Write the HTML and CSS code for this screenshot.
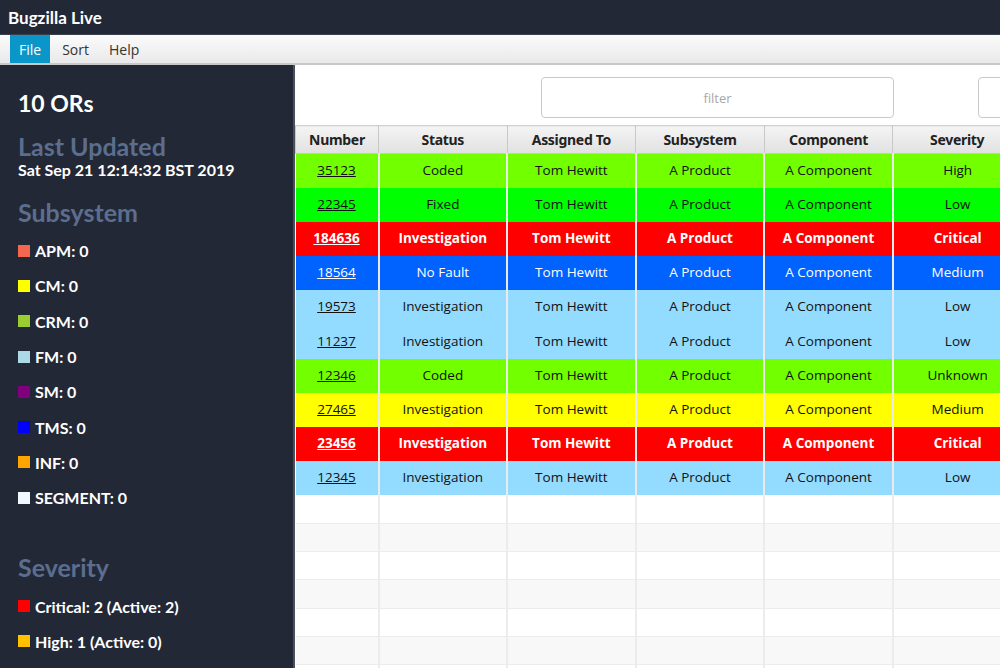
FILE: index.html
```html
<!DOCTYPE html>
<html>
<head>
<meta charset="utf-8">
<link rel="stylesheet" href="styles.css">
</head>
<body>
<div class="titlebar">Bugzilla Live</div>
<div class="menubar">
  <span class="menu active">File</span>
  <span class="menu">Sort</span>
  <span class="menu">Help</span>
</div>
<div class="main">
  <aside class="sidebar">
    <div class="count">10 ORs</div>
    <div class="heading">Last Updated</div>
    <div class="date">Sat Sep 21 12:14:32 BST 2019</div>
    <div class="heading sub">Subsystem</div>
    <ul class="legend">
      <li><span class="sq" style="background:#f4664d"></span>APM: 0</li>
      <li><span class="sq" style="background:#ffff00"></span>CM: 0</li>
      <li><span class="sq" style="background:#9acd32"></span>CRM: 0</li>
      <li><span class="sq" style="background:#add8e6"></span>FM: 0</li>
      <li><span class="sq" style="background:#800080"></span>SM: 0</li>
      <li><span class="sq" style="background:#0000ff"></span>TMS: 0</li>
      <li><span class="sq" style="background:#ffa500"></span>INF: 0</li>
      <li><span class="sq" style="background:#f0f8ff"></span>SEGMENT: 0</li>
    </ul>
    <div class="heading sev">Severity</div>
    <ul class="legend">
      <li><span class="sq" style="background:#ff0000"></span>Critical: 2 (Active: 2)</li>
      <li><span class="sq" style="background:#ffc000"></span>High: 1 (Active: 0)</li>
    </ul>
  </aside>
  <section class="content">
    <div class="filters">
      <input class="filter" type="text" placeholder="filter">
      <input class="filter second" type="text">
    </div>
    <table class="grid">
      <colgroup>
        <col class="c-num"><col class="c-wide"><col class="c-wide"><col class="c-wide"><col class="c-wide"><col class="c-wide">
      </colgroup>
      <thead>
        <tr><th>Number</th><th>Status</th><th>Assigned To</th><th>Subsystem</th><th>Component</th><th>Severity</th></tr>
      </thead>
      <tbody>
        <tr class="lime"><td><a>35123</a></td><td>Coded</td><td>Tom Hewitt</td><td>A Product</td><td>A Component</td><td>High</td></tr>
        <tr class="green"><td><a>22345</a></td><td>Fixed</td><td>Tom Hewitt</td><td>A Product</td><td>A Component</td><td>Low</td></tr>
        <tr class="red"><td><a>184636</a></td><td>Investigation</td><td>Tom Hewitt</td><td>A Product</td><td>A Component</td><td>Critical</td></tr>
        <tr class="blue"><td><a>18564</a></td><td>No Fault</td><td>Tom Hewitt</td><td>A Product</td><td>A Component</td><td>Medium</td></tr>
        <tr class="sky"><td><a>19573</a></td><td>Investigation</td><td>Tom Hewitt</td><td>A Product</td><td>A Component</td><td>Low</td></tr>
        <tr class="sky"><td><a>11237</a></td><td>Investigation</td><td>Tom Hewitt</td><td>A Product</td><td>A Component</td><td>Low</td></tr>
        <tr class="lime"><td><a>12346</a></td><td>Coded</td><td>Tom Hewitt</td><td>A Product</td><td>A Component</td><td>Unknown</td></tr>
        <tr class="yellow"><td><a>27465</a></td><td>Investigation</td><td>Tom Hewitt</td><td>A Product</td><td>A Component</td><td>Medium</td></tr>
        <tr class="red"><td><a>23456</a></td><td>Investigation</td><td>Tom Hewitt</td><td>A Product</td><td>A Component</td><td>Critical</td></tr>
        <tr class="sky"><td><a>12345</a></td><td>Investigation</td><td>Tom Hewitt</td><td>A Product</td><td>A Component</td><td>Low</td></tr>
        <tr class="empty"><td></td><td></td><td></td><td></td><td></td><td></td></tr>
        <tr class="empty"><td></td><td></td><td></td><td></td><td></td><td></td></tr>
        <tr class="empty"><td></td><td></td><td></td><td></td><td></td><td></td></tr>
        <tr class="empty"><td></td><td></td><td></td><td></td><td></td><td></td></tr>
        <tr class="empty"><td></td><td></td><td></td><td></td><td></td><td></td></tr>
        <tr class="empty"><td></td><td></td><td></td><td></td><td></td><td></td></tr>
        <tr class="empty"><td></td><td></td><td></td><td></td><td></td><td></td></tr>
      </tbody>
    </table>
  </section>
</div>
</body>
</html>
```
FILE: styles.css
```css
* { box-sizing: border-box; }
html, body { margin: 0; padding: 0; width: 1000px; height: 668px; overflow: hidden; }
body { font-family: "Open Sans", "Noto Sans", sans-serif; background: #232837; }

.titlebar {
  height: 35px;
  background: #232837;
  color: #ffffff;
  font-family: "Lato", "DejaVu Sans", sans-serif;
  font-weight: 700;
  font-size: 17px;
  padding: 7px 0 0 8px;
  border-bottom: 1px solid #3a3f4d;
}
.menubar {
  height: 30px;
  background: linear-gradient(#fbfbfb, #e9e9e9);
  border-bottom: 2px solid #c8c8c8;
  display: flex;
  align-items: stretch;
  padding-left: 10px;
  font-size: 14px;
  color: #333;
}
.menu { padding: 5px 10px 0 10px; }
.menu.active { background: #0a96c9; color: #fff; padding: 5px 9px 0 9px; margin-right: 2px; }

.main { display: flex; height: 603px; }
.sidebar {
  width: 295px;
  flex: none;
  background: #232837;
  border-right: 2px solid #4a4f5c;
  padding: 24px 0 0 18px;
  font-family: "Lato", "DejaVu Sans", sans-serif;
  color: #fff;
}
.count { font-size: 23px; font-weight: 700; line-height: 28px; }
.heading { color: #5b6e8e; font-size: 25px; font-weight: 700; line-height: 28px; margin-top: 15px; }
.heading.sub { margin-top: 18px; }
.heading.sev { margin-top: 38px; }
.date { font-size: 16px; font-weight: 700; line-height: 20px; margin-top: 0; }
.legend { list-style: none; margin: 7px 0 0 0; padding: 0; }
.legend li { display: flex; align-items: center; height: 35.3px; font-size: 16px; font-weight: 700; }
.sq { width: 12px; height: 12px; margin-right: 5px; flex: none; }

.content { flex: 1; background: #fff; overflow: hidden; }
.filters { height: 60px; display: flex; align-items: flex-start; padding: 12px 0 0 246px; gap: 84px; }
.filter {
  width: 353px;
  height: 41px;
  border: 1px solid #c9c9c9;
  border-radius: 4px;
  background: #fff;
  font-family: "Open Sans", sans-serif;
  font-size: 13px;
  text-align: center;
  color: #999;
  flex: none;
}
.filter::placeholder { color: #a8a8a8; }
.filter.second { width: 120px; }

.grid { border-collapse: collapse; table-layout: fixed; width: 726px; font-size: 13.5px; }
.c-num { width: 83px; }
.c-wide { width: 128.6px; }
.grid th {
  height: 28px;
  background: linear-gradient(#f4f4f4, #e1e1e1);
  border: 1px solid #c8c8c8;
  border-top: 1px solid #d0d0d0;
  font-family: "Noto Sans", sans-serif;
  font-size: 14px;
  font-weight: 700;
  color: #222;
  padding: 0;
  letter-spacing: -0.3px;
  white-space: nowrap;
}
.grid td {
  height: 34.2px;
  text-align: center;
  padding: 0 0 2px 0;
  border-left: 2px solid #eaeaea;
  color: #111;
  white-space: nowrap;
}
.grid td:first-child { border-left: none; }
.grid td a { text-decoration: underline; color: inherit; }
.lime td { background: #72ff00; }
.green td { background: #00ff00; }
.red td { background: #ff0000; color: #fff; font-weight: 700; }
.blue td { background: #0062ff; color: #fff; }
.sky td { background: #93dcff; }
.yellow td { background: #ffff00; }
.grid tr.empty td { height: 28.2px; padding: 0; background: #fff; border-left: 2px solid #ececec; border-bottom: 1px solid #ececec; }
.grid tr.empty:nth-child(even) td { background: #f8f8f8; }
.grid tr.empty td:first-child { border-left: none; }
```
